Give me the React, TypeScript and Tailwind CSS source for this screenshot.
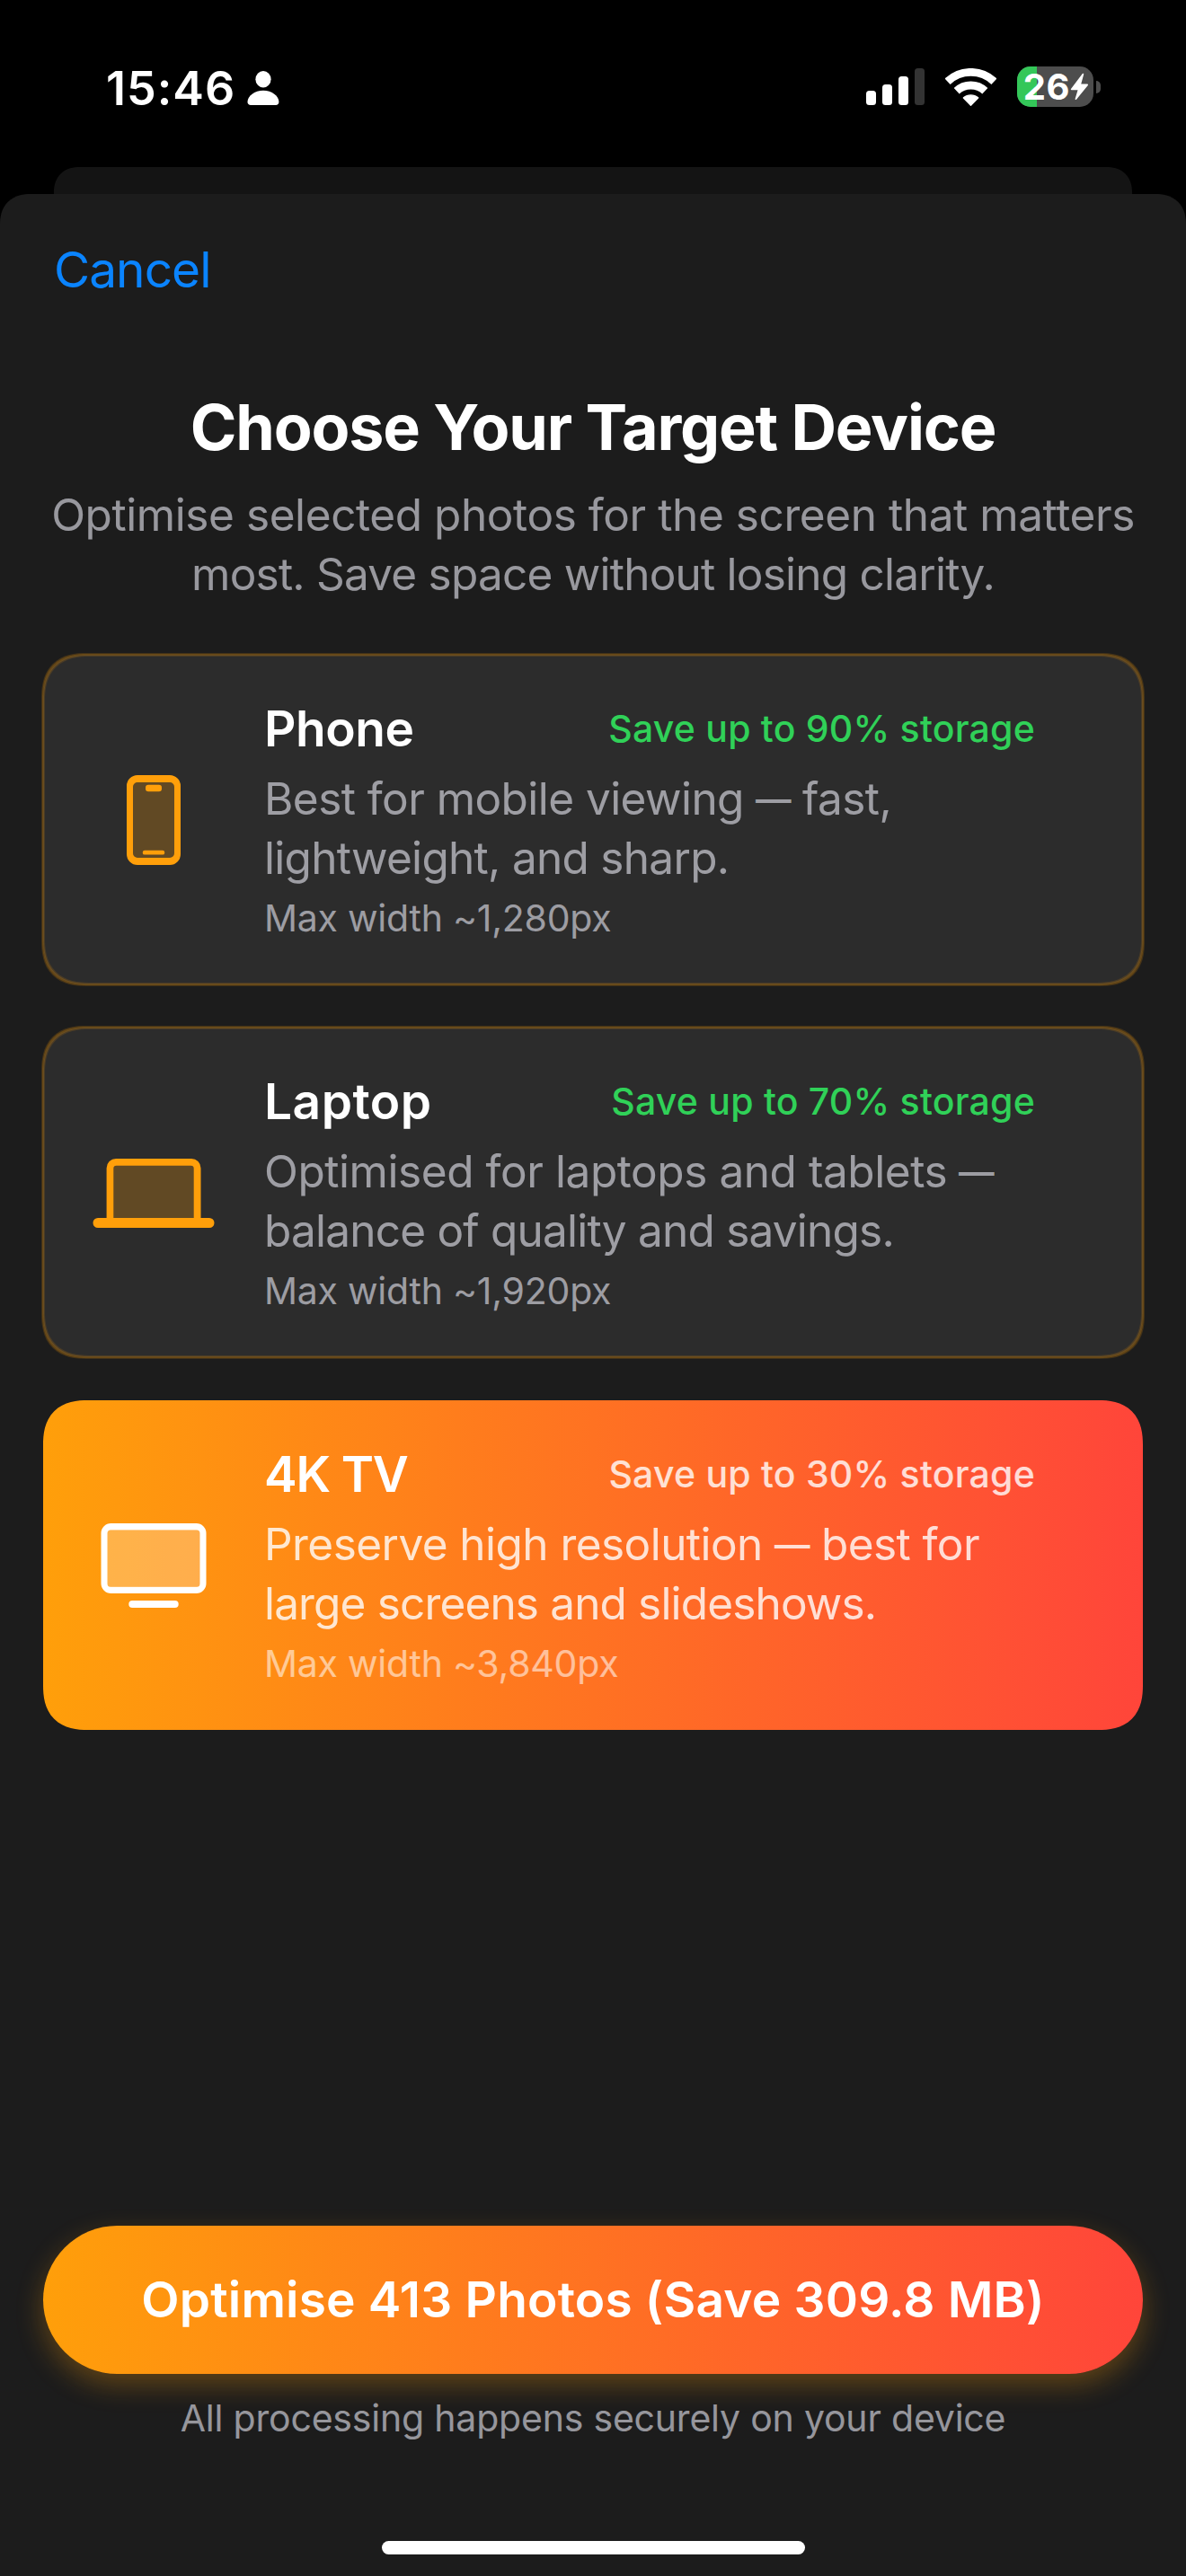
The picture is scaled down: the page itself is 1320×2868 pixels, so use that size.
import type { ReactNode } from "react";

function PersonIcon() {
  return (
    <svg width="36" height="38" viewBox="0 0 36 38" fill="#fff">
      <ellipse cx="18" cy="9.3" rx="8.6" ry="9.2" />
      <path d="M18 21.8C27.6 21.8 35.4 28 35.4 34.6C35.4 37 34 38 32 38H4C2 38 0.5 37 0.5 34.6C0.5 28 8.4 21.8 18 21.8Z" />
    </svg>
  );
}

function SignalIcon() {
  return (
    <div className="flex h-[41px] items-end gap-[7px]">
      <div className="h-[16px] w-[11px] rounded-[3.5px] bg-white" />
      <div className="h-[23px] w-[11px] rounded-[3.5px] bg-white" />
      <div className="h-[32px] w-[11px] rounded-[3.5px] bg-white" />
      <div className="h-[41px] w-[11px] rounded-[3.5px] bg-[#333]" />
    </div>
  );
}

function WifiIcon() {
  return (
    <svg width="57" height="42" viewBox="0 0 57 42" fill="none">
      <path d="M2.6 14.7A37.6 37.6 0 0 1 54.4 14.7" stroke="#fff" strokeWidth="8.8" />
      <path d="M12.7 25.3A23 23 0 0 1 44.3 25.3" stroke="#fff" strokeWidth="8.8" />
      <path
        d="M20.4 32.9A12.4 12.4 0 0 1 36.6 32.9L28.5 41.2Z"
        fill="#fff"
        stroke="#fff"
        strokeWidth="1.4"
        strokeLinejoin="round"
      />
    </svg>
  );
}

function Battery() {
  return (
    <div className="flex items-center gap-[3px]">
      <div className="relative flex h-[45px] w-[85px] items-center rounded-[15px] bg-[#4d4d4d] pl-[6.7px]">
        <div className="absolute inset-y-0 left-0 w-[22px] rounded-l-[15px] bg-[#34c759]" />
        <span className="relative text-[40px] leading-[49px] font-bold tracking-[0.6px] text-white">26</span>
        <svg className="absolute inset-0" width="85" height="45" viewBox="0 0 85 45">
          <path
            d="M73.4 8.6L60.6 25.4H68.6L65.4 36.2L78.2 20.4H70.2Z"
            fill="#fff"
            stroke="#fff"
            strokeWidth="1.6"
            strokeLinejoin="round"
          />
        </svg>
      </div>
      <div className="h-[14px] w-[5px] rounded-r-full bg-[#4d4d4d]" />
    </div>
  );
}

function PhoneIcon() {
  return (
    <svg width="60" height="100" viewBox="0 0 60 100">
      <rect x="3.5" y="4" width="53" height="92" rx="8" fill="#ff9f0a" fillOpacity="0.25" />
      <path
        fill="#ff9f0a"
        fillRule="evenodd"
        d="M12 0H48A12 12 0 0 1 60 12V88A12 12 0 0 1 48 100H12A12 12 0 0 1 0 88V12A12 12 0 0 1 12 0ZM12 8A5 5 0 0 0 7 13V87A5 5 0 0 0 12 92H48A5 5 0 0 0 53 87V13A5 5 0 0 0 48 8Z"
      />
      <rect x="21" y="10.8" width="18" height="7.4" rx="3.2" fill="#ff9f0a" />
      <rect x="17.8" y="83.8" width="24.4" height="4.8" rx="2.2" fill="#ff9f0a" />
    </svg>
  );
}

function LaptopIcon() {
  return (
    <svg width="136" height="77" viewBox="0 0 136 77">
      <rect x="20" y="4" width="96" height="66" fill="#ff9f0a" fillOpacity="0.25" />
      <path
        fill="#ff9f0a"
        d="M15.6 66V10.5A10.5 10.5 0 0 1 26.1 0H110A10.5 10.5 0 0 1 120.5 10.5V66H130A5.5 5.5 0 0 1 130 77H6A5.5 5.5 0 0 1 6 66ZM23.3 66H112.7V11A3.2 3.2 0 0 0 109.5 7.8H26.5A3.2 3.2 0 0 0 23.3 11Z"
        fillRule="evenodd"
      />
    </svg>
  );
}

function TvIcon() {
  return (
    <svg width="118" height="94" viewBox="0 0 118 94">
      <rect x="7.6" y="7.4" width="102.8" height="63.4" rx="3.5" fill="#fff" fillOpacity="0.25" />
      <path
        fill="#fff"
        fillRule="evenodd"
        d="M11.5 0H106.5A11 11 0 0 1 117.5 11V67A11 11 0 0 1 106.5 78H11.5A11 11 0 0 1 0.5 67V11A11 11 0 0 1 11.5 0ZM11.1 7.4A3.5 3.5 0 0 0 7.6 10.9V67.3A3.5 3.5 0 0 0 11.1 70.8H106.9A3.5 3.5 0 0 0 110.4 67.3V10.9A3.5 3.5 0 0 0 106.9 7.4Z"
      />
      <rect x="31.3" y="86" width="55.4" height="8" rx="4" fill="#fff" />
    </svg>
  );
}

/** Em dash narrowed to suit the surrounding text. */
function Dash() {
  return <span className="mx-[-5.3px] inline-block scale-x-80">—</span>;
}

type Line = { content: ReactNode; tracking: string };

type CardProps = {
  icon: ReactNode;
  title: string;
  titleTracking: string;
  saving: string;
  lines: Line[];
  max: string;
  selected?: boolean;
};

function DeviceCard({ icon, title, titleTracking, saving, lines, max, selected }: CardProps) {
  const surface = selected
    ? "bg-linear-to-r/srgb from-[#ff9f0a] to-[#ff453a]"
    : "bg-[#2c2c2c] shadow-[0_0_0_1px_rgba(255,159,10,0.2),0_0_0_2px_rgba(255,159,10,0.17),inset_0_0_0_1px_rgba(255,159,10,0.18),inset_0_0_0_2px_rgba(255,159,10,0.14)]";
  return (
    <button
      className={`flex h-[367px] w-full items-center gap-12 rounded-[43px] pr-[120px] pl-12 text-left supports-[corner-shape:squircle]:rounded-[50px] supports-[corner-shape:squircle]:[corner-shape:superellipse(1.3)] ${surface}`}
    >
      <div className="flex w-[150px] shrink-0 justify-center pt-px">{icon}</div>
      <div className="flex h-full flex-1 flex-col pt-12">
        <div className="flex h-[68px] items-center justify-between">
          <span className={`text-[55px] leading-[68px] font-semibold text-white ${titleTracking}`}>{title}</span>
          <span
            className={`text-[41px] leading-[50px] font-medium tracking-[0.22px] ${selected ? "text-white/80" : "text-[#30d158]"}`}
          >
            {saving}
          </span>
        </div>
        <p
          className={`mt-[11px] text-[49.5px] leading-[66px] whitespace-nowrap ${selected ? "text-white/80" : "text-[rgba(235,235,245,0.6)]"}`}
        >
          {lines.map((line, i) => (
            <span key={i} className={`block h-[66px] ${line.tracking}`}>
              {line.content}
            </span>
          ))}
        </p>
        <p
          className={`mt-[9px] text-[41px] leading-[50px] tracking-[-0.24px] ${selected ? "text-white/55" : "text-[rgba(235,235,245,0.6)]"}`}
        >
          {max}
        </p>
      </div>
    </button>
  );
}

export default function App() {
  return (
    <div className="flex h-[2868px] w-[1320px] flex-col overflow-hidden bg-black font-['Inter',sans-serif]">
      <header className="flex h-[186px] shrink-0 items-center justify-between pt-[10px] pr-[95px] pl-[118px]">
        <div className="flex items-center gap-[13px]">
          <span className="text-[52px] leading-[63px] font-semibold tracking-[1px] text-white">15:46</span>
          <PersonIcon />
        </div>
        <div className="mb-[3px] flex items-center gap-[23px]">
          <SignalIcon />
          <WifiIcon />
          <Battery />
        </div>
      </header>

      <div className="mx-[60px] h-[30px] shrink-0 rounded-t-[28px] bg-[#141414] supports-[corner-shape:squircle]:[corner-shape:superellipse(1.15)]" />

      <main className="flex flex-1 flex-col rounded-t-[34px] bg-[#1c1c1c] px-12 pt-[51px] supports-[corner-shape:squircle]:[corner-shape:superellipse(1.2)]">
        <button className="ml-[12px] self-start text-[55px] leading-[66px] tracking-[-0.97px] text-[#0a84ff]">
          Cancel
        </button>

        <h1 className="mt-[100px] text-center text-[70px] leading-[85px] font-bold tracking-[-1.17px] text-white">
          Choose Your Target Device
        </h1>
        <p className="mt-[22px] text-center text-[49.5px] leading-[66px] whitespace-nowrap text-[rgba(235,235,245,0.6)]">
          <span className="block tracking-[-0.42px]">Optimise selected photos for the screen that matters</span>
          <span className="block tracking-[-0.77px]">most. Save space without losing clarity.</span>
        </p>

        <div className="mt-[57px] flex flex-col gap-12">
          <DeviceCard
            icon={<PhoneIcon />}
            title="Phone"
            titleTracking="tracking-[-0.45px]"
            saving="Save up to 90% storage"
            lines={[
              { content: <>Best for mobile viewing <Dash /> fast,</>, tracking: "tracking-[-0.55px]" },
              { content: "lightweight, and sharp.", tracking: "tracking-[-0.7px]" },
            ]}
            max="Max width ~1,280px"
          />
          <DeviceCard
            icon={<LaptopIcon />}
            title="Laptop"
            titleTracking="tracking-[0.49px]"
            saving="Save up to 70% storage"
            lines={[
              { content: <>Optimised for laptops and tablets <Dash /></>, tracking: "tracking-[-0.43px]" },
              { content: "balance of quality and savings.", tracking: "tracking-[-0.78px]" },
            ]}
            max="Max width ~1,920px"
          />
          <DeviceCard
            selected
            icon={<TvIcon />}
            title="4K TV"
            titleTracking="tracking-[-1.17px]"
            saving="Save up to 30% storage"
            lines={[
              { content: <>Preserve high resolution <Dash /> best for</>, tracking: "tracking-[-0.55px]" },
              { content: "large screens and slideshows.", tracking: "tracking-[-0.84px]" },
            ]}
            max="Max width ~3,840px"
          />
        </div>

        <footer className="mt-auto flex flex-col items-center pb-6">
          <button className="flex h-[165px] w-full items-center justify-center rounded-full bg-linear-to-r/srgb from-[#ff9f0a] to-[#ff453a] pb-px text-[55px] leading-[66px] font-semibold tracking-[0.18px] text-white shadow-[0_12px_30px_rgba(255,159,10,0.3)]">
            Optimise 413 Photos (Save 309.8 MB)
          </button>
          <p className="mt-6 text-[41px] leading-[50px] tracking-[-0.2px] text-[rgba(235,235,245,0.6)]">
            All processing happens securely on your device
          </p>
          <div className="mt-[112px] h-[15px] w-[471px] rounded-full bg-white" />
        </footer>
      </main>
    </div>
  );
}
